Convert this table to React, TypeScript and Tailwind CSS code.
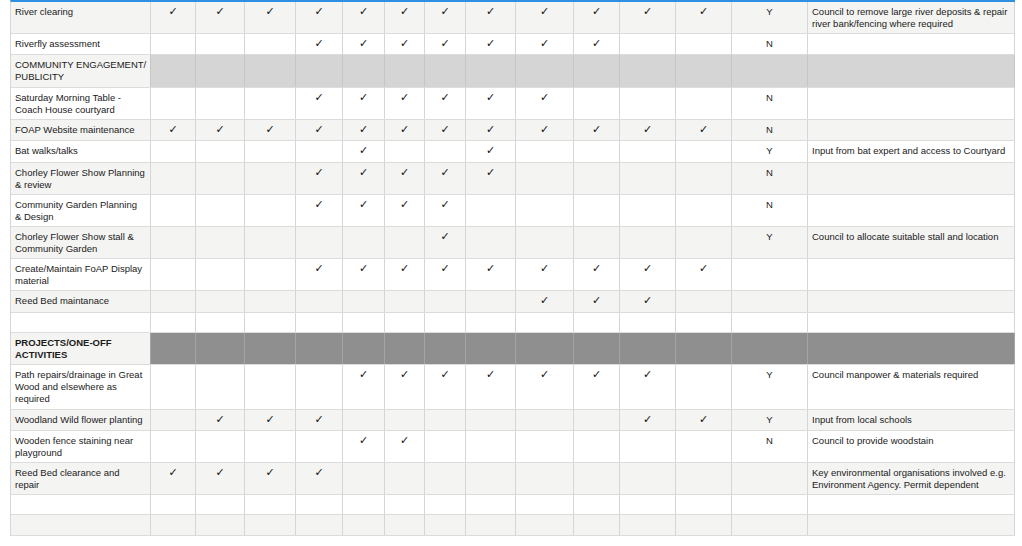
const cols =
  "grid grid-cols-[140px_45px_49px_51px_47px_42px_40px_41px_50px_58px_46px_56px_56px_76px_207px]"

type Row = {
  label: string[]
  checks?: number[]
  yn?: string
  note?: string[]
  h: string
  kind: "alt" | "plain" | "section" | "dark"
  bold?: boolean
}

const range = (a: number, b: number) => Array.from({ length: b - a + 1 }, (_, i) => a + i)

const rows: Row[] = [
  {
    label: ["River clearing"],
    checks: range(1, 12),
    yn: "Y",
    note: ["Council to remove large river deposits & repair", "river bank/fencing where required"],
    h: "h-[32px]",
    kind: "alt",
  },
  { label: ["Riverfly assessment"], checks: range(4, 10), yn: "N", h: "h-[21px]", kind: "plain" },
  { label: ["COMMUNITY ENGAGEMENT/", "PUBLICITY"], h: "h-[33px]", kind: "section" },
  {
    label: ["Saturday Morning Table -", "Coach House courtyard"],
    checks: range(4, 9),
    yn: "N",
    h: "h-[32px]",
    kind: "plain",
  },
  { label: ["FOAP Website maintenance"], checks: range(1, 12), yn: "N", h: "h-[21px]", kind: "alt" },
  {
    label: ["Bat walks/talks"],
    checks: [5, 8],
    yn: "Y",
    note: ["Input from bat expert and access to Courtyard"],
    h: "h-[22px]",
    kind: "plain",
  },
  {
    label: ["Chorley Flower Show Planning", "& review"],
    checks: range(4, 8),
    yn: "N",
    h: "h-[32px]",
    kind: "alt",
  },
  {
    label: ["Community Garden Planning", "& Design"],
    checks: range(4, 7),
    yn: "N",
    h: "h-[32px]",
    kind: "plain",
  },
  {
    label: ["Chorley Flower Show stall &", "Community Garden"],
    checks: [7],
    yn: "Y",
    note: ["Council to allocate suitable stall and location"],
    h: "h-[32px]",
    kind: "alt",
  },
  {
    label: ["Create/Maintain FoAP Display", "material"],
    checks: range(4, 12),
    h: "h-[32px]",
    kind: "plain",
  },
  { label: ["Reed Bed maintanace"], checks: range(9, 11), h: "h-[22px]", kind: "alt" },
  { label: [], h: "h-[20px]", kind: "plain" },
  { label: ["PROJECTS/ONE-OFF", "ACTIVITIES"], h: "h-[32px]", kind: "dark", bold: true },
  {
    label: ["Path repairs/drainage in Great", "Wood and elsewhere as", "required"],
    checks: range(5, 11),
    yn: "Y",
    note: ["Council manpower & materials required"],
    h: "h-[45px]",
    kind: "plain",
  },
  {
    label: ["Woodland Wild flower planting"],
    checks: [2, 3, 4, 11, 12],
    yn: "Y",
    note: ["Input from local schools"],
    h: "h-[21px]",
    kind: "alt",
  },
  {
    label: ["Wooden fence staining near", "playground"],
    checks: [5, 6],
    yn: "N",
    note: ["Council to provide woodstain"],
    h: "h-[32px]",
    kind: "plain",
  },
  {
    label: ["Reed Bed clearance and", "repair"],
    checks: range(1, 4),
    note: ["Key environmental organisations involved e.g.", "Environment Agency. Permit dependent"],
    h: "h-[32px]",
    kind: "alt",
  },
  { label: [], h: "h-[20px]", kind: "plain" },
  { label: [], h: "h-[21px]", kind: "alt" },
]

const rowBg = {
  alt: "bg-[#f4f4f2]",
  plain: "bg-white",
  section: "bg-[#d5d5d5]",
  dark: "bg-[#8f8f8f]",
}

const cellLine = {
  alt: "border-[#d6d6d6]",
  plain: "border-[#d6d6d6]",
  section: "border-[#c6c6c6]",
  dark: "border-[#a4a4a4]",
}

function Lines({ lines }: { lines: string[] }) {
  return (
    <>
      {lines.map((l, i) => (
        <div key={i} className="whitespace-nowrap">
          {l}
        </div>
      ))}
    </>
  )
}

function TableRow({ row }: { row: Row }) {
  const header = row.kind === "section" || row.kind === "dark"
  return (
    <div className={`${cols} ${row.h} ${rowBg[row.kind]} border-b border-[#dcdcdc]`}>
      <div
        className={`border-r ${cellLine[row.kind]} pl-[4px] pt-[4px] ${
          header ? "bg-[#f4f4f2]" : ""
        } ${row.bold ? "font-bold" : ""}`}
      >
        <Lines lines={row.label} />
      </div>
      {range(1, 12).map((c) => (
        <div key={c} className={`border-r ${cellLine[row.kind]} pt-[3px] text-center leading-[13px]`}>
          {row.checks?.includes(c) && (
            <span className="font-['DejaVu_Sans',sans-serif] font-bold text-[11px] text-[#111]">✓</span>
          )}
        </div>
      ))}
      <div className={`border-r ${cellLine[row.kind]} pt-[4px] text-center font-medium`}>{row.yn}</div>
      <div className={`border-r ${cellLine[row.kind]} pl-[4px] pt-[4px]`}>
        {row.note && <Lines lines={row.note} />}
      </div>
    </div>
  )
}

export default function App() {
  return (
    <div className="w-[1022px] h-[546px] bg-white overflow-hidden font-['Liberation_Sans',Arial,sans-serif] text-[9.5px] leading-[12px] text-[#1a1a1a]">
      <div className="ml-[10px] w-[1005px] border-l border-t-2 border-l-[#d6d6d6] border-t-[#2f8fe0]">
        {rows.map((row, i) => (
          <TableRow key={i} row={row} />
        ))}
      </div>
    </div>
  )
}
